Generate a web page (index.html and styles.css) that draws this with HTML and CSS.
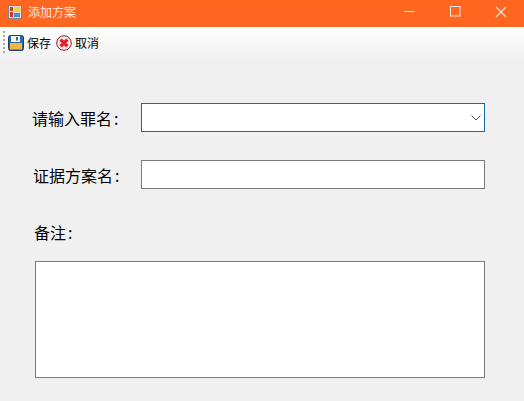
FILE: index.html
```html
<!DOCTYPE html>
<html lang="zh">
<head>
<meta charset="utf-8">
<title>添加方案</title>
<link rel="stylesheet" href="styles.css">
</head>
<body>
<div class="window">
  <header class="titlebar">
    <svg class="app-icon" width="16" height="16" viewBox="0 0 16 16">
      <rect x="1.5" y="1.5" width="13" height="13" fill="#dcdad8" stroke="#8a7f88"/>
      <rect x="3" y="3" width="3" height="4" fill="#a8503a"/>
      <rect x="3" y="8" width="3" height="5" fill="#c8362e"/>
      <rect x="7" y="3" width="6" height="5" fill="#f6cf3e"/>
      <rect x="7" y="9" width="6" height="4" fill="#4d8fd0"/>
    </svg>
    <span class="title">添加方案</span>
    <div class="controls">
      <span class="ctl"><svg width="11" height="11" viewBox="0 0 11 11"><path d="M0 5.5h10.5" stroke="#ffe8dc" fill="none"/></svg></span>
      <span class="ctl"><svg width="11" height="11" viewBox="0 0 11 11"><rect x=".5" y=".5" width="9.5" height="9.5" stroke="#ffe8dc" fill="none"/></svg></span>
      <span class="ctl"><svg width="12" height="12" viewBox="0 0 12 12"><path d="M1 1l10 10M11 1L1 11" stroke="#ffe8dc" stroke-width="1.1" fill="none"/></svg></span>
    </div>
  </header>
  <nav class="toolbar">
    <span class="grip"></span>
    <button class="tool">
      <svg width="16" height="16" viewBox="0 0 16 16">
        <rect x=".5" y=".5" width="15" height="15" rx="2" fill="#2f68a8" stroke="#1b3c70"/>
        <rect x="3" y="1" width="9" height="6" fill="#f4f6fa"/>
        <rect x="8" y="2" width="2" height="3.5" fill="#2f68a8"/>
        <rect x="2" y="8" width="12" height="6.5" fill="#f2b640"/>
      </svg>
      <span>保存</span>
    </button>
    <button class="tool">
      <svg width="16" height="16" viewBox="0 0 16 16">
        <circle cx="8" cy="8" r="7.3" fill="#f9e6e6" stroke="#8a2030"/>
        <path d="M4.6 4.6l6.8 6.8M11.4 4.6l-6.8 6.8" stroke="#e0202e" stroke-width="3.4" fill="none"/>
      </svg>
      <span>取消</span>
    </button>
  </nav>
  <main class="form">
    <div class="row row-name">
      <label class="label">请输入罪名<span class="colon">:</span></label>
      <div class="combo">
        <svg width="10" height="6" viewBox="0 0 10 6"><path d="M.5.5L5 5 9.5.5" stroke="#555" fill="none"/></svg>
      </div>
    </div>
    <div class="row row-plan">
      <label class="label">证据方案名<span class="colon">:</span></label>
      <div class="field"></div>
    </div>
    <div class="note-label">备注<span class="colon">:</span></div>
    <div class="note"></div>
  </main>
</div>
</body>
</html>
```
FILE: styles.css
```css
* { box-sizing: border-box; }
html, body { margin: 0; height: 100%; }
body { font-family: "Noto Sans CJK SC", "Liberation Sans", sans-serif; background: #f0f0f0; color: #000; overflow: hidden; }
.window { width: 524px; height: 401px; display: flex; flex-direction: column; }
.titlebar { height: 27px; background: #ff6620; display: flex; align-items: center; padding: 0 0 4px 7px; color: #ffe9dd; flex: none; }
.app-icon { flex: none; }
.title { font-size: 12px; line-height: 16px; margin-left: 5px; }
.controls { margin-left: auto; display: flex; height: 100%; }
.ctl { width: 46px; display: flex; align-items: center; justify-content: center; }
.toolbar { height: 33px; flex: none; background: linear-gradient(#ffffff, #f8f8f8 45%, #f0f0f0); display: flex; align-items: center; padding: 0 0 2px 3px; }
.grip { width: 2px; height: 24px; margin-right: 3px; background: repeating-linear-gradient(#a9a9a9 0 2px, transparent 2px 4px); }
.tool { display: flex; align-items: center; gap: 3px; padding: 0; margin: 0 5px 0 0; border: 0; background: none; font: inherit; font-size: 12px; color: #000; }
.form { padding: 43px 39px 0 35px; flex: 1; }
.row { display: flex; align-items: center; height: 29px; }
.row-plan { margin-top: 28px; }
.label { font-size: 16px; line-height: 20px; flex: none; }
.colon { margin-left: 2px; }
.row-name .label { margin-left: -3px; width: 109px; }
.row-plan .label { margin-left: -2px; width: 108px; }
.combo { flex: 1; height: 29px; background: #fff; border: 1px solid #0f6fa8; display: flex; align-items: center; justify-content: flex-end; padding-right: 3px; }
.field { flex: 1; height: 29px; background: #fff; border: 1px solid #7a7a7a; }
.note-label { margin: 33px 0 0 -1px; height: 20px; font-size: 16px; line-height: 20px; }
.note { margin-top: 19px; height: 117px; background: #fff; border: 1px solid #7a7a7a; }
```
